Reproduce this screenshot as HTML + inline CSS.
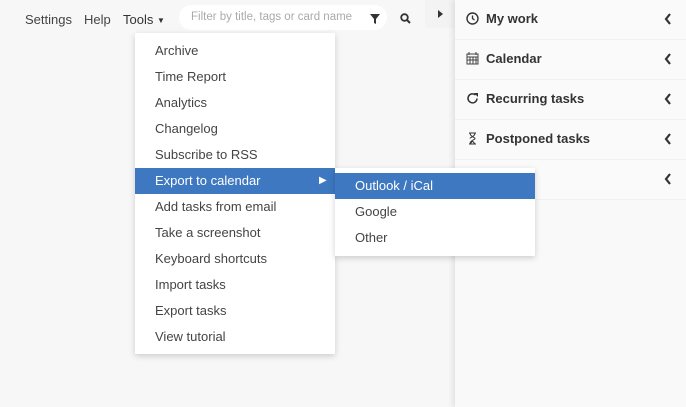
<!DOCTYPE html>
<html><head><style>
*{margin:0;padding:0;box-sizing:border-box}
body{width:686px;height:407px;background:#f7f7f7;font-family:"Liberation Sans",sans-serif;position:relative;overflow:hidden;color:#333}
.nav{position:absolute;top:12px;font-size:13px;color:#444}
.search{position:absolute;left:179px;top:5px;width:208px;height:25px;background:#fff;border-radius:13px;font-size:11.5px;color:#aaa;padding:6px 0 0 12px}
.menu{position:absolute;left:135px;top:33px;width:200px;height:321px;background:#fff;box-shadow:0 2px 6px rgba(0,0,0,.18)}
.menu div,.sub div{height:26px;line-height:26px;padding-left:20px;font-size:13px;color:#444}
.menu .hl,.sub .hl{background:#3d78c0;color:#fff}
.sub{position:absolute;left:335px;top:168px;width:200px;height:88px;background:#fff;box-shadow:0 2px 6px rgba(0,0,0,.18);padding-top:5px}
.panel{position:absolute;left:455px;top:0;width:231px;height:407px;background:#f9f9f9;box-shadow:-3px 0 5px rgba(0,0,0,.08)}
.row{height:40px;border-bottom:1px solid #f0f0f0;background:#fafafa;position:relative;font-weight:bold;font-size:13px;color:#333;line-height:38px;padding-left:31px}
.row svg.i{position:absolute;left:11px;top:12px}
.row .ch{position:absolute;right:14px;top:13px}
</style></head><body>
<div class="nav" style="left:25px">Settings</div>
<div class="nav" style="left:84px">Help</div>
<div class="nav" style="left:123px;color:#333">Tools <span style="font-size:8px;position:relative;top:-1px">▼</span></div>
<div class="search">Filter by title, tags or card name</div>
<svg style="position:absolute;left:370px;top:14px" width="10" height="10" viewBox="0 0 10 10"><path d="M0 0H10L6 5V10L4 9V5Z" fill="#333"/></svg>
<svg style="position:absolute;left:400px;top:13px" width="11" height="11" viewBox="0 0 11 11"><circle cx="4.5" cy="4.5" r="3.3" stroke="#333" stroke-width="1.8" fill="none"/><path d="M7 7L10 10" stroke="#333" stroke-width="2"/></svg>
<div style="position:absolute;left:425px;top:0;width:30px;height:28px;background:#f3f3f3"></div>
<svg style="position:absolute;left:438px;top:10px" width="5" height="8"><path d="M0 0L5 4L0 8Z" fill="#333"/></svg>
<div class="menu">
<div style="margin-top:5px">Archive</div><div>Time Report</div><div>Analytics</div><div>Changelog</div><div>Subscribe to RSS</div>
<div class="hl">Export to calendar<span style="position:absolute;left:184px;font-size:10px">▶</span></div>
<div>Add tasks from email</div><div>Take a screenshot</div><div>Keyboard shortcuts</div><div>Import tasks</div><div>Export tasks</div><div>View tutorial</div>
</div>
<div class="panel">
<div class="row"><svg class="i" width="13" height="13"><circle cx="6.5" cy="6.5" r="5.5" stroke="#333" stroke-width="1.4" fill="none"/><path d="M6.5 3.5V6.5L8.5 8" stroke="#333" stroke-width="1.3" fill="none"/></svg>My work<svg class="ch" width="8" height="12"><path d="M6 1L2 6L6 11" stroke="#333" stroke-width="2.2" fill="none"/></svg></div>
<div class="row"><svg class="i" width="13" height="13"><rect x="1" y="2" width="11" height="10" stroke="#444" fill="none"/><path d="M1 5H12M4 5V12M7 5V12M10 5V12M1 8H12M3 0V3M10 0V3" stroke="#444"/></svg>Calendar<svg class="ch" width="8" height="12"><path d="M6 1L2 6L6 11" stroke="#333" stroke-width="2.2" fill="none"/></svg></div>
<div class="row"><svg class="i" width="13" height="13"><path d="M11 6.5A4.5 4.5 0 1 1 9.5 3" stroke="#333" stroke-width="1.5" fill="none"/><path d="M8 1H12V5Z" fill="#333"/></svg>Recurring tasks<svg class="ch" width="8" height="12"><path d="M6 1L2 6L6 11" stroke="#333" stroke-width="2.2" fill="none"/></svg></div>
<div class="row"><svg class="i" width="13" height="13"><path d="M3 1H10M3 12H10M4 1C4 5 9 5 9 6.5C9 8 4 8 4 12M9 1C9 5 4 5 4 6.5M9 12L6.5 9L4 12Z" stroke="#333" fill="none"/></svg>Postponed tasks<svg class="ch" width="8" height="12"><path d="M6 1L2 6L6 11" stroke="#333" stroke-width="2.2" fill="none"/></svg></div>
<div class="row">Planner<svg class="ch" width="8" height="12"><path d="M6 1L2 6L6 11" stroke="#333" stroke-width="2.2" fill="none"/></svg></div>
</div>
<div class="sub"><div class="hl">Outlook / iCal</div><div>Google</div><div>Other</div></div>
</body></html>
